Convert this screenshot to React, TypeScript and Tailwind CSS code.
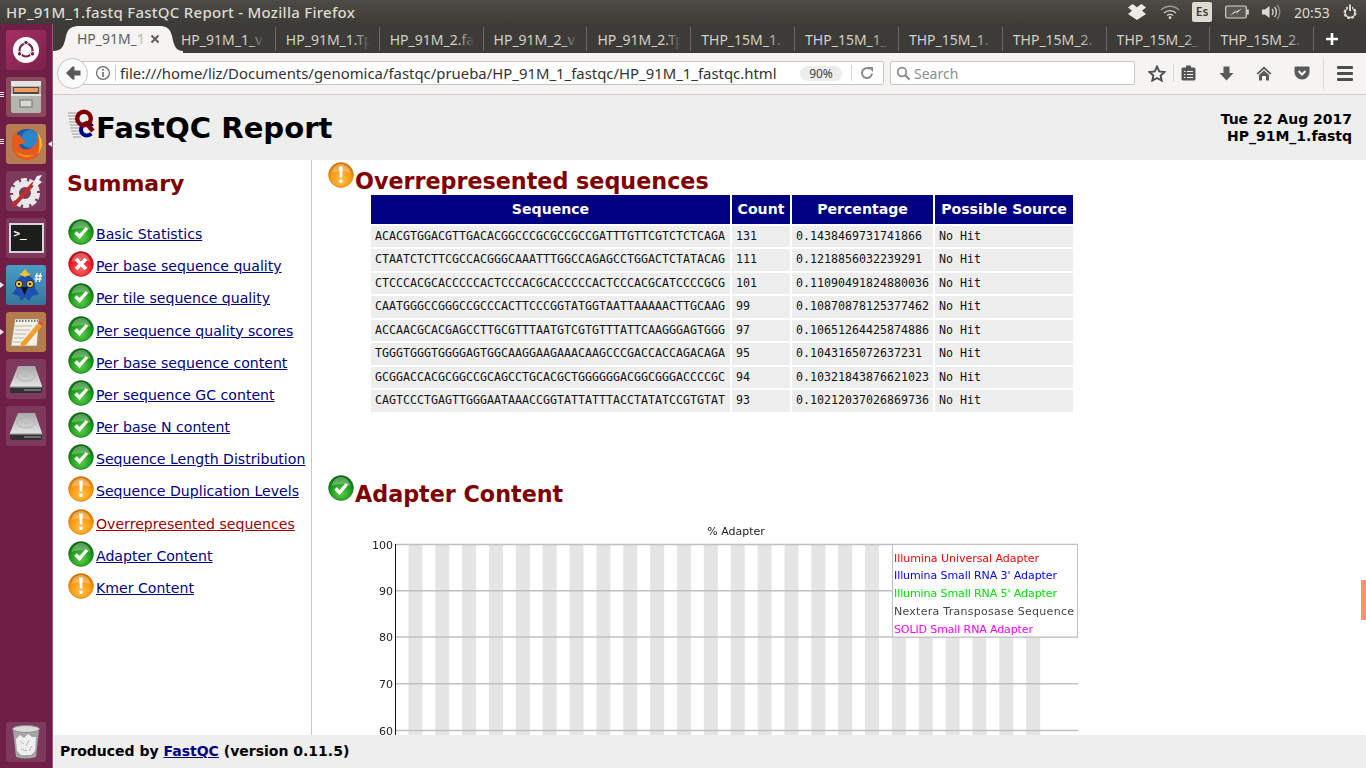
import { ReactNode } from 'react';

const tabs = ['HP_91M_1_v', 'HP_91M_1.Tp', 'HP_91M_2.fa', 'HP_91M_2_v', 'HP_91M_2.Tp', 'THP_15M_1.', 'THP_15M_1_', 'THP_15M_1.', 'THP_15M_2.', 'THP_15M_2_', 'THP_15M_2.'];

type Status = 'ok' | 'fail' | 'warn';

const summary: { label: string; status: Status; current?: boolean }[] = [
  { label: 'Basic Statistics', status: 'ok' },
  { label: 'Per base sequence quality', status: 'fail' },
  { label: 'Per tile sequence quality', status: 'ok' },
  { label: 'Per sequence quality scores', status: 'ok' },
  { label: 'Per base sequence content', status: 'ok' },
  { label: 'Per sequence GC content', status: 'ok' },
  { label: 'Per base N content', status: 'ok' },
  { label: 'Sequence Length Distribution', status: 'ok' },
  { label: 'Sequence Duplication Levels', status: 'warn' },
  { label: 'Overrepresented sequences', status: 'warn', current: true },
  { label: 'Adapter Content', status: 'ok' },
  { label: 'Kmer Content', status: 'warn' },
];

const rows = [
  ['ACACGTGGACGTTGACACGGCCCGCGCCGCCGATTTGTTCGTCTCTCAGA', '131', '0.1438469731741866'],
  ['CTAATCTCTTCGCCACGGGCAAATTTGGCCAGAGCCTGGACTCTATACAG', '111', '0.1218856032239291'],
  ['CTCCCACGCACCCCCACTCCCACGCACCCCCACTCCCACGCATCCCCGCG', '101', '0.11090491824880036'],
  ['CAATGGGCCGGGCCGCCCACTTCCCGGTATGGTAATTAAAAACTTGCAAG', '99', '0.10870878125377462'],
  ['ACCAACGCACGAGCCTTGCGTTTAATGTCGTGTTTATTCAAGGGAGTGGG', '97', '0.10651264425874886'],
  ['TGGGTGGGTGGGGAGTGGCAAGGAAGAAACAAGCCCGACCACCAGACAGA', '95', '0.1043165072637231'],
  ['GCGGACCACGCGGCCGCAGCCTGCACGCTGGGGGGACGGCGGGACCCCGC', '94', '0.10321843876621023'],
  ['CAGTCCCTGAGTTGGGAATAAACCGGTATTATTTACCTATATCCGTGTAT', '93', '0.10212037026869736'],
];

const statusColors = {
  ok: { id: 'st-ok', light: '#5fd04a', mid: '#1d9a1d', dark: '#0d6a12' },
  fail: { id: 'st-fail', light: '#ff6a6a', mid: '#ee1c25', dark: '#b90d16' },
  warn: { id: 'st-warn', light: '#ffc04d', mid: '#fb9a0e', dark: '#cf7606' },
};

function StatusIcon({ status }: { status: Status }) {
  const c = statusColors[status];
  return (
    <svg width="26" height="26" viewBox="0 0 26 26" className="shrink-0">
      <defs>
        <radialGradient id={c.id} cx="50%" cy="70%" r="65%">
          <stop offset="0%" stopColor={c.light} />
          <stop offset="65%" stopColor={c.mid} />
          <stop offset="100%" stopColor={c.dark} />
        </radialGradient>
      </defs>
      <circle cx="13" cy="13" r="12.4" fill={`url(#${c.id})`} stroke={c.dark} strokeWidth="0.6" />
      <path d="M3.5 11 C5 4.5 9 2 13 2 C17 2 21 4.5 22.5 11 C17 8.5 9 8.5 3.5 11Z" fill="#fff" opacity="0.3" />
      {status === 'ok' && <path d="M7.5 13.5 L11.5 17.5 L19 9" fill="none" stroke="#fff" strokeWidth="3.4" />}
      {status === 'fail' && <path d="M8 8 L18 18 M18 8 L8 18" fill="none" stroke="#fff" strokeWidth="3.8" />}
      {status === 'warn' && (
        <g fill="#fff">
          <path d="M11.2 4.5 H14.8 L14.2 15.5 H11.8Z" />
          <rect x="11.4" y="17.5" width="3.2" height="3.4" rx="0.8" />
        </g>
      )}
    </svg>
  );
}

function Tile({ bg, children, pip }: { bg: string; children: ReactNode; pip?: ReactNode }) {
  return (
    <div className={`relative w-10 h-10 rounded-[3px] flex items-center justify-center shrink-0 ml-[6px] ${bg}`}>
      {pip}
      {children}
    </div>
  );
}

const Pip = () => <span className="absolute left-[-6px] top-[17px] w-0 h-0 border-y-[3px] border-y-transparent border-l-[4px] border-l-[#e8e4e8]" />;
const Bars = () => (
  <span className="absolute left-[-6px] top-[15px] flex flex-col gap-px">
    <i className="block w-1 h-px bg-[#e8e4e8]" />
    <i className="block w-1 h-px bg-[#e8e4e8]" />
    <i className="block w-1 h-px bg-[#e8e4e8]" />
  </span>
);

function Disk() {
  return (
    <svg width="36" height="36" viewBox="0 0 36 36">
      <defs>
        <linearGradient id="disk-top" x1="0" y1="0" x2="0" y2="1">
          <stop offset="0%" stopColor="#a8a8a8" />
          <stop offset="100%" stopColor="#e2e2e2" />
        </linearGradient>
      </defs>
      <path d="M10 5 H27 L34 25 H2Z" fill="url(#disk-top)" />
      <path d="M2 25 H34 V30 Q34 32 32 32 H4 Q2 32 2 30Z" fill="#303030" />
      <path d="M2 25 H34 V26.5 H2Z" fill="#b5b5b5" />
      <path d="M16 29 H33" stroke="#8a8a8a" strokeWidth="1.4" />
      <ellipse cx="18" cy="15" rx="9" ry="5" fill="none" stroke="#b4b4b4" />
      <ellipse cx="18" cy="15" rx="2.5" ry="1.4" fill="#bdbdbd" />
    </svg>
  );
}

function Launcher() {
  return (
    <aside className="w-[53px] shrink-0 bg-[#6f1f46] border-r border-r-[#96597a] flex flex-col pt-[6px] pb-[6px] gap-[7px]">
      <Tile bg="bg-gradient-to-br from-[#a53163] to-[#7d1f4c]">
        <svg width="36" height="36" viewBox="0 0 36 36">
          <circle cx="18" cy="18" r="13" fill="#fff" />
          <circle cx="18" cy="18" r="6.5" fill="none" stroke="#7a1f4a" strokeWidth="2.2" />
          <circle cx="18" cy="10.5" r="2.2" fill="#7a1f4a" stroke="#fff" />
          <circle cx="11.5" cy="21.8" r="2.2" fill="#7a1f4a" stroke="#fff" />
          <circle cx="24.5" cy="21.8" r="2.2" fill="#7a1f4a" stroke="#fff" />
        </svg>
      </Tile>
      <Tile bg="bg-[#8a4a5c]" pip={<Bars />}>
        <svg width="32" height="36" viewBox="0 0 32 36">
          <rect x="1" y="2" width="30" height="32" rx="2" fill="#b5b5b0" />
          <rect x="1" y="2" width="30" height="5" fill="#e4e4e0" />
          <rect x="3" y="8" width="26" height="7" fill="#4a4a48" />
          <rect x="4" y="9" width="24" height="4" fill="#ee9a5a" />
          <rect x="1" y="15" width="30" height="2" fill="#e2e2de" />
          <rect x="10" y="21" width="12" height="7" fill="#d8d8d4" stroke="#6d6d6a" />
        </svg>
      </Tile>
      <Tile bg="bg-[#b87c52]" pip={<><Bars /><span className="absolute left-[40px] top-[17px] w-0 h-0 border-y-[3px] border-y-transparent border-r-[4px] border-r-[#e8e4e8] ml-[2px]" /></>}>
        <svg width="36" height="36" viewBox="0 0 36 36">
          <circle cx="19" cy="18" r="15" fill="#1e5aa8" />
          <circle cx="22" cy="13" r="9" fill="#2b86c6" />
          <path d="M4 17 C3 27 11 34 19 34 C28 34 34 27 34 18 C34 12 31 8 29 6 C31 12 29 17 25 21 C20 25 12 24 11 18 C14 19 17 17 18 15 C14 14 13 12 12 9 C9 10 8 7 9 4 C5 8 4 12 4 17Z" fill="#e8591d" />
          <path d="M29 6 C32 9 34 13 34 18 C34 22 32 26 30 28 C32 22 32 13 29 6Z" fill="#f6c22b" />
          <path d="M8 26 C12 31 20 33 26 29 C20 30 13 29 8 26Z" fill="#f59a1f" />
        </svg>
      </Tile>
      <Tile bg="bg-[#7e3a5d]">
        <svg width="36" height="36" viewBox="0 0 36 36">
          <circle cx="17" cy="20" r="12" fill="none" stroke="#e8e8e8" strokeWidth="6" strokeDasharray="5.5 2" />
          <circle cx="17" cy="20" r="9" fill="none" stroke="#e8e8e8" strokeWidth="6" />
          <path d="M6 32 L25 11" stroke="#c02c2c" strokeWidth="4" strokeLinecap="round" />
          <path d="M24 12 L29 3 L34 2 L31 7 L34 9 L28 14Z" fill="#f0f0f0" />
        </svg>
      </Tile>
      <Tile bg="bg-[#7e3a5d]">
        <div className="w-[35px] h-[30px] bg-[#1d1d1d] border-2 border-[#d5d5d5] flex items-start pl-[3px] pt-[3px] text-[11px] leading-[12px] font-bold text-white font-['DejaVu_Sans_Mono',monospace]">&gt;_</div>
      </Tile>
      <Tile bg="bg-gradient-to-b from-[#4a9cc4] to-[#35789c]" pip={<Pip />}>
        <svg width="36" height="36" viewBox="0 0 36 36">
          <path d="M17 8 C9 9 8 16 8 22 L4 27 L11 29 L13 34 L17 30 L21 34 L24 29 L31 27 L27 21 C27 14 25 9 17 8Z" fill="#1f4fb0" />
          <path d="M17 2 L20 6 L23 7 L17 10 L11 7 L14 6Z" fill="#f2c531" />
          <circle cx="11" cy="17" r="3.6" fill="#f2d33c" stroke="#222" />
          <circle cx="22" cy="17" r="3.6" fill="#f2d33c" stroke="#222" />
          <circle cx="11" cy="17" r="1.3" fill="#222" />
          <circle cx="22" cy="17" r="1.3" fill="#222" />
          <path d="M13 20 H20 L16.5 28Z" fill="#111" />
          <path d="M27 9 H34 M26.5 12 H33.5 M29 6 L28 15 M32.5 6 L31.5 15" stroke="#fff" strokeWidth="1.3" />
        </svg>
      </Tile>
      <Tile bg="bg-[#b37c4a]" pip={<Pip />}>
        <svg width="36" height="36" viewBox="0 0 36 36">
          <path d="M7 5 H31 L29 32 H3Z" fill="#f3f1e8" stroke="#8e8a7e" strokeWidth="0.6" />
          <path d="M8 7 H30" stroke="#777" strokeWidth="2" strokeDasharray="1.5 1.5" />
          <path d="M7 12 H24 M7 16 H22 M6 20 H18 M6 24 H16 M5 28 H15" stroke="#b8b6ac" strokeWidth="1.2" />
          <path d="M13 29 L30 9 L34 12 L18 31 L12 33Z" fill="#f0a030" />
          <path d="M30 9 L32 6.5 L36 9.5 L34 12Z" fill="#d8544a" />
        </svg>
      </Tile>
      <Tile bg="bg-[#7e3a5d]"><Disk /></Tile>
      <Tile bg="bg-[#7e3a5d]"><Disk /></Tile>
      <div className="mt-auto">
        <Tile bg="bg-[#7e3a5d]">
          <svg width="30" height="36" viewBox="0 0 30 36">
            <path d="M2 6 L5 33 Q15 36 25 33 L28 6 Q15 10 2 6Z" fill="#a5a5a5" />
            <ellipse cx="15" cy="5" rx="13.5" ry="3.5" fill="#dadada" stroke="#8c8c8c" />
            <path d="M5 15 L9 11 L13 14 L17 10 L21 13 L25 13 L24 27 L20 31 L10 31 L6 27Z" fill="#efefef" />
            <path d="M9 17 L13 20 M18 16 L15 22 M10 25 L16 27 M21 22 L18 27" stroke="#b8b8b8" />
          </svg>
        </Tile>
      </div>
    </aside>
  );
}

function TopPanel() {
  return (
    <header className="h-6 shrink-0 bg-gradient-to-b from-[#4d4b45] to-[#3c3b37] flex items-center text-[#dfdbd2] font-['Noto_Sans',sans-serif]">
      <span className="pl-[6px] text-[15px] font-medium whitespace-nowrap tracking-[0.27px]">HP_91M_1.fastq FastQC Report - Mozilla Firefox</span>
      <div className="ml-auto flex items-center">
        <svg width="18" height="16" viewBox="0 0 18 16" className="mr-[14px]"><path d="M0 3.5 L4.5 0 L9 3.2 L13.5 0 L18 3.5 L14 6.7 L18 10 L13.5 13 L9 16 L4.5 13 L0 10 L4 6.7Z" fill="#eeeae2" /></svg>
        <svg width="20" height="14" viewBox="0 0 20 14" fill="none" stroke="#d8d4cb" strokeWidth="1.3" className="mr-[12px]">
          <path d="M1 5 C6 0 14 0 19 5" opacity="0.6" />
          <path d="M4 8 C7.5 4.8 12.5 4.8 16 8" />
          <path d="M7 10.5 C9 9 11 9 13 10.5" />
          <circle cx="10" cy="12.6" r="0.8" fill="#d8d4cb" />
        </svg>
        <span className="w-5 h-5 rounded-[2px] bg-[#dfdbd2] text-[#3c3b37] text-[12px] leading-5 text-center font-semibold mr-[13px]">Es</span>
        <svg width="24" height="14" viewBox="0 0 24 14" className="mr-[12px]">
          <rect x="0.7" y="1" width="20.6" height="12" rx="1.5" fill="#5a5850" stroke="#d8d4cb" strokeWidth="1.2" />
          <rect x="22" y="4.5" width="1.8" height="5" fill="#d8d4cb" />
          <path d="M5 10.5 L12 6.5 L11 9 L17 3.5 L10 7 L11 5 Z" fill="#e8e4da" />
        </svg>
        <svg width="20" height="16" viewBox="0 0 20 16" className="mr-[13px]" fill="none">
          <path d="M1 5.5 H4 L8.5 2 V14 L4 10.5 H1Z" fill="#dfdbd2" />
          <path d="M11 5 C12.5 6.5 12.5 9.5 11 11" stroke="#dfdbd2" strokeWidth="1.3" />
          <path d="M13.5 3 C16 5.5 16 10.5 13.5 13" stroke="#dfdbd2" strokeWidth="1.3" />
          <path d="M16 1 C19.6 4.5 19.6 11.5 16 15" stroke="#8f8c84" strokeWidth="1.3" />
        </svg>
        <span className="text-[14px] mr-[13px] w-[35px] whitespace-nowrap">20:53</span>
        <svg width="16" height="16" viewBox="0 0 16 16" className="mr-[8px]" fill="none">
          <circle cx="8" cy="8.7" r="5.4" stroke="#dfdbd2" strokeWidth="2.2" strokeDasharray="2.6 1.6" />
          <circle cx="8" cy="8.7" r="4.8" stroke="#dfdbd2" strokeWidth="1.4" />
          <path d="M8 0.5 V7" stroke="#3c3b37" strokeWidth="4" />
          <path d="M8 0.5 V7" stroke="#dfdbd2" strokeWidth="2" />
        </svg>
      </div>
    </header>
  );
}

function TabStrip() {
  return (
    <div className="h-[29px] shrink-0 bg-[#3c3b37] flex pl-[14px] font-['Noto_Sans',sans-serif] text-[14px]">
      <div className="relative w-[104px] shrink-0 flex items-center pl-[10px] text-[#5f5e5a]">
        <svg width="132" height="29" viewBox="0 0 132 29" className="absolute left-[-14px] top-0">
          <path d="M0 27 C9 27 11 22 13 12 C15 4 19 2 27 2 H106 C113 2 117 4 119 12 C121 22 123 27 130 27 V29 H0Z" fill="#f5f4f2" />
        </svg>
        <span className="relative w-[69px] overflow-hidden whitespace-nowrap">HP_91M_1
          <i className="absolute right-0 top-0 bottom-0 w-3 bg-gradient-to-r from-transparent to-[#f5f4f2]" />
        </span>
        <svg width="10" height="10" viewBox="0 0 10 10" className="relative ml-[4px]"><path d="M1.5 1.5 L8.5 8.5 M8.5 1.5 L1.5 8.5" stroke="#5f5e5a" strokeWidth="2" /></svg>
      </div>
      {tabs.map((t, i) => (
        <div key={i} className={`w-[103.85px] shrink-0 h-[24px] mt-[3px] flex items-center pl-[10px] text-[#d3d0c8] ${i === 0 ? '' : 'border-l border-l-[#6a6963] pl-[9px]'}`}>
          <span className="relative w-[84px] overflow-hidden whitespace-nowrap">{t}
            <i className="absolute right-0 top-0 bottom-0 w-4 bg-gradient-to-r from-transparent to-[#3c3b37]" />
          </span>
        </div>
      ))}
      <div className="h-[24px] mt-[3px] border-l border-l-[#6a6963] pl-[11px] flex items-center">
        <svg width="14" height="14" viewBox="0 0 14 14"><path d="M7 1 V13 M1 7 H13" stroke="#fff" strokeWidth="2.6" /></svg>
      </div>
    </div>
  );
}

function Toolbar() {
  return (
    <div className="h-[42px] shrink-0 bg-[#f5f4f2] border-b border-b-[#cfccc7] flex items-center pl-[4px] font-['Noto_Sans',sans-serif] pb-px">
      <div className="relative z-10 w-[31px] h-[31px] rounded-full bg-[#fafafa] border border-[#c4c3c0] flex items-center justify-center shrink-0">
        <svg width="16" height="14" viewBox="0 0 16 14"><path d="M7.5 0.5 L1 7 L7.5 13.5 L9.5 13.5 L9.5 9.5 L15.5 9.5 L15.5 4.5 L9.5 4.5 L9.5 0.5Z" fill="#595959" /></svg>
      </div>
      <div className="ml-[-16px] w-[812px] h-6 bg-white border border-[#c9c7c3] rounded-r-[2px] flex items-center shrink-0">
        <svg width="16" height="16" viewBox="0 0 16 16" className="ml-[22px] shrink-0" fill="none">
          <circle cx="8" cy="8" r="6.4" stroke="#666" strokeWidth="1.2" />
          <path d="M8 7 V12" stroke="#666" strokeWidth="1.6" />
          <circle cx="8" cy="4.8" r="1" fill="#666" />
        </svg>
        <span className="w-px h-[16px] bg-[#c9c7c3] ml-[4px] mr-[4px] shrink-0" />
        <span className="w-[658px] pt-px overflow-hidden whitespace-nowrap text-[14.9px] text-[#333]">file:///home/liz/Documents/genomica/fastqc/prueba/HP_91M_1_fastqc/HP_91M_1_fastqc.html</span>
        <span className="ml-[22px] w-[42px] h-[15px] shrink-0 rounded-full bg-[#ededed] text-[12px] leading-[15px] text-center text-[#444]">90%</span>
        <span className="w-px h-[16px] bg-[#d5d3cf] ml-[9px] shrink-0" />
        <svg width="14" height="14" viewBox="0 0 14 14" className="ml-[8px] shrink-0" fill="none">
          <path d="M12 7.5 A5 5 0 1 1 10 3" stroke="#8a8a8a" strokeWidth="2" />
          <path d="M8 1 L13 1 L13 6Z" fill="#8a8a8a" />
        </svg>
      </div>
      <div className="ml-[6px] w-[245px] h-6 bg-white border border-[#c9c7c3] rounded-[2px] flex items-center shrink-0">
        <svg width="15" height="15" viewBox="0 0 15 15" className="ml-[5px]" fill="none">
          <circle cx="6" cy="6" r="4.3" stroke="#8a8a8a" strokeWidth="1.7" />
          <path d="M9.2 9.2 L13.5 13.5" stroke="#8a8a8a" strokeWidth="2.2" />
        </svg>
        <span className="ml-[3px] pt-px text-[14px] text-[#8c8c8c]">Search</span>
      </div>
      <div className="ml-[6px] w-[32px] flex justify-center">
        <svg width="18" height="17" viewBox="0 0 18 17"><path d="M9 1.6 L11.2 6.4 L16.5 7 L12.6 10.5 L13.7 15.6 L9 13 L4.3 15.6 L5.4 10.5 L1.5 7 L6.8 6.4Z" fill="none" stroke="#4d4d4d" strokeWidth="1.9" /></svg>
      </div>
      <span className="w-px h-[18px] bg-[#d9d7d3]" />
      <div className="w-[28px] flex justify-center">
        <svg width="15" height="16" viewBox="0 0 15 16">
          <rect x="0.5" y="2.5" width="14" height="13" rx="1.5" fill="#555" />
          <rect x="5" y="0.5" width="5" height="3" fill="#555" />
          <path d="M3 6.5 H4.5 M6 6.5 H12 M3 9.5 H4.5 M6 9.5 H12 M3 12.5 H4.5 M6 12.5 H12" stroke="#f5f4f2" strokeWidth="1.2" />
        </svg>
      </div>
      <div className="w-[48px] flex justify-center">
        <svg width="15" height="15" viewBox="0 0 15 15"><path d="M4.5 0.5 H10.5 V7 H14.5 L7.5 14.5 L0.5 7 H4.5Z" fill="#5a5a5a" /></svg>
      </div>
      <div className="w-[28px] flex justify-center">
        <svg width="16" height="15" viewBox="0 0 16 15"><path d="M8 0.5 L0.5 7.5 L2 8.5 L8 3 L14 8.5 L15.5 7.5Z M3 9 L8 4.5 L13 9 V14.5 H10 V10 H6 V14.5 H3Z" fill="#5a5a5a" /></svg>
      </div>
      <div className="ml-[3px] w-[42px] flex justify-center">
        <svg width="16" height="14" viewBox="0 0 16 14"><path d="M1.5 0.5 H14.5 Q15.5 0.5 15.5 1.5 V6 C15.5 10 12 13.5 8 13.5 C4 13.5 0.5 10 0.5 6 V1.5 Q0.5 0.5 1.5 0.5Z" fill="#5a5a5a" /><path d="M4.5 5 L8 8.5 L11.5 5" fill="none" stroke="#f5f4f2" strokeWidth="2" /></svg>
      </div>
      <span className="w-px h-[32px] bg-[#dedcd8]" />
      <div className="w-[42px] flex flex-col items-center gap-[3px]">
        <i className="block w-4 h-[3px] bg-[#4d4d4d] rounded-[1px]" />
        <i className="block w-4 h-[3px] bg-[#4d4d4d] rounded-[1px]" />
        <i className="block w-4 h-[3px] bg-[#4d4d4d] rounded-[1px]" />
      </div>
    </div>
  );
}

function AdapterChart() {
  const stripes = Array.from({ length: 24 }, (_, i) => 48.4 + i * 26.86);
  const ticks = [
    { label: '100', y: 24.5 },
    { label: '90', y: 70.7 },
    { label: '80', y: 117 },
    { label: '70', y: 163.7 },
    { label: '60', y: 210.5 },
  ];
  const legend = [
    { label: 'Illumina Universal Adapter', color: '#ff0000', w: 145 },
    { label: "Illumina Small RNA 3' Adapter", color: '#0000ff', w: 163 },
    { label: "Illumina Small RNA 5' Adapter", color: '#00e000', w: 163 },
    { label: 'Nextera Transposase Sequence', color: '#444444', w: 180 },
    { label: 'SOLID Small RNA Adapter', color: '#ff00ff', w: 139 },
  ];
  return (
    <svg width="730" height="240" viewBox="0 0 730 240" className="ml-[32px] mt-[15px] shrink-0 blur-[0.3px] font-['DejaVu_Sans',sans-serif]">
      <text x="376" y="15" textAnchor="middle" fontSize="11" fill="#222">% Adapter</text>
      {stripes.map(x => <rect key={x} x={x} y="24" width="14" height="216" fill="#e5e5e5" />)}
      {ticks.map(t => (
        <g key={t.label}>
          <line x1="35" x2="718" y1={t.y} y2={t.y} stroke="#c0c0c0" strokeWidth="1.4" />
          <text x="33" y={t.y + 4} textAnchor="end" fontSize="11" fill="#222">{t.label}</text>
        </g>
      ))}
      <line x1="35.5" x2="35.5" y1="24" y2="240" stroke="#111" />
      <rect x="532.5" y="24.5" width="185" height="92.5" fill="#fff" stroke="#c0c0c0" />
      {legend.map((l, i) => (
        <text key={l.label} x="534" y={41.5 + i * 17.8} fontSize="11" fill={l.color} textLength={l.w}>{l.label}</text>
      ))}
    </svg>
  );
}

export default function App() {
  return (
    <div className="w-[1366px] h-[768px] overflow-hidden flex flex-col bg-white">
      <TopPanel />
      <div className="flex flex-1 min-h-0">
        <Launcher />
        <div className="relative flex-1 min-w-0 flex flex-col">
          <TabStrip />
          <Toolbar />
          <div className="flex-1 min-h-0 flex flex-col font-['DejaVu_Sans',sans-serif]">
            <div className="h-[65px] shrink-0 bg-[#eeeeee] flex items-start">
              <svg width="31" height="32" viewBox="0 0 31 32" className="ml-[15px] mt-[13px] shrink-0" fill="none">
                <path d="M0 5 H10 M0 8 H10 M1 11 H11 M1 14 H11 M2 17 H12 M2 20 H12 M3 23 H13 M4 26 H13 M5 29 H13" stroke="#9a9a9a" strokeWidth="1" />
                <circle cx="19" cy="21.5" r="6" stroke="#000080" strokeWidth="4" strokeDasharray="29 9" strokeDashoffset="-4.5" />
                <circle cx="16" cy="10.5" r="6.8" stroke="#800000" strokeWidth="4.4" />
                <path d="M17 14 L25 23" stroke="#800000" strokeWidth="4.4" />
              </svg>
              <h1 className="ml-[-3px] mt-[14px] text-[29.1px] leading-[38px] font-bold text-black whitespace-nowrap">FastQC Report</h1>
              <div className="ml-auto mr-[14px] mt-[16px] text-right text-[14px] leading-[17px] font-bold text-black">
                <div>Tue 22 Aug 2017</div>
                <div>HP_91M_1.fastq</div>
              </div>
            </div>
            <div className="flex-1 min-h-0 flex overflow-hidden">
              <nav className="w-[259px] shrink-0 border-r border-r-[#c8c8c8] pl-[15px]">
                <h2 className="mt-[10px] ml-[-1px] text-[22px] leading-[28px] font-bold text-[#800000]">Summary</h2>
                <ul className="mt-[21px]">
                  {summary.map(s => (
                    <li key={s.label} className="h-[32.18px] flex items-start">
                      <StatusIcon status={s.status} />
                      <a href="#" className={`mt-[5px] ml-[2px] text-[14.1px] leading-[20px] underline whitespace-nowrap ${s.current ? 'text-[#990000]' : 'text-[#000080]'}`}>{s.label}</a>
                    </li>
                  ))}
                </ul>
              </nav>
              <main className="flex-1 min-w-0 flex flex-col pl-[16px]">
                <div className="flex items-start mt-[2px] h-[33px] shrink-0">
                  <StatusIcon status="warn" />
                  <h2 className="ml-px mt-[4px] text-[22.25px] leading-[30px] font-bold text-[#800000] whitespace-nowrap">Overrepresented sequences</h2>
                </div>
                <table className="ml-[41px] mt-[-2px] w-[706px] table-fixed border-separate border-spacing-[2px] shrink-0">
                  <thead>
                    <tr>
                      <th className="w-[359px] h-[29px] pt-px bg-[#000080] text-white text-[14.1px] font-bold">Sequence</th>
                      <th className="w-[58px] pt-px bg-[#000080] text-white text-[14.1px] font-bold">Count</th>
                      <th className="w-[141px] pt-px bg-[#000080] text-white text-[14.1px] font-bold">Percentage</th>
                      <th className="pt-px bg-[#000080] text-white text-[14.1px] font-bold">Possible Source</th>
                    </tr>
                  </thead>
                  <tbody className="font-['DejaVu_Sans_Mono',monospace] text-[11.63px] text-[#111]">
                    {rows.map(r => (
                      <tr key={r[0]}>
                        <td className="h-[21.45px] bg-[#eeeeee] pl-[4px] whitespace-nowrap overflow-hidden">{r[0]}</td>
                        <td className="bg-[#eeeeee] pl-[4px]">{r[1]}</td>
                        <td className="bg-[#eeeeee] pl-[4px]">{r[2]}</td>
                        <td className="bg-[#eeeeee] pl-[4px]">No Hit</td>
                      </tr>
                    ))}
                  </tbody>
                </table>
                <div className="flex items-start mt-[61px] h-[30px] shrink-0">
                  <StatusIcon status="ok" />
                  <h2 className="ml-px mt-[4px] text-[22.25px] leading-[30px] font-bold text-[#800000] whitespace-nowrap">Adapter Content</h2>
                </div>
                <AdapterChart />
              </main>
            </div>
            <footer className="relative h-[33px] shrink-0 bg-[#eeeeee] pl-[7px] flex items-center text-[14px] font-bold text-black whitespace-pre">
              Produced by <a href="#" className="text-[#000080] underline">FastQC</a> (version 0.11.5)
            </footer>
          </div>
          <span className="absolute right-0 top-[556px] w-[5px] h-10 bg-[#f4956a]" />
        </div>
      </div>
    </div>
  );
}
